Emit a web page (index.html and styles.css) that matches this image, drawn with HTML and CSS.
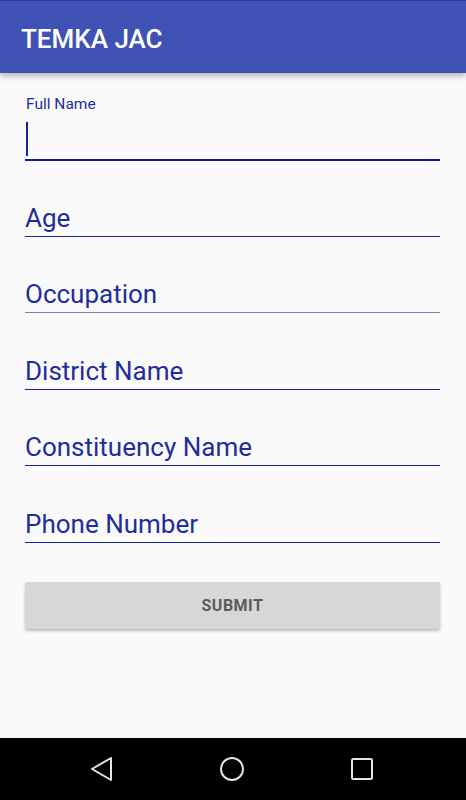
FILE: index.html
```html
<!DOCTYPE html>
<html lang="en">
<head>
	<meta charset="UTF-8">
	<meta name="viewport" content="width=device-width, initial-scale=1.0">
	<title>TEMKA JAC</title>
	<link rel="stylesheet" href="styles.css">
</head>
<body>
	<div class="screen">
		<div class="appbar">TEMKA JAC</div>
		<div class="content">
			<div class="field focused">
				<div class="label">Full Name</div>
				<div class="input"><span class="cursor"></span></div>
			</div>
			<div class="field">Age</div>
			<div class="field light">Occupation</div>
			<div class="field">District Name</div>
			<div class="field">Constituency Name</div>
			<div class="field">Phone Number</div>
			<button class="submit">SUBMIT</button>
		</div>
		<div class="navbar">
			<svg width="24" height="26" viewBox="0 0 24 26"><path d="M2 13 L21 2 L21 24 Z" fill="none" stroke="#e6e6e6" stroke-width="2" stroke-linejoin="round"/></svg>
			<svg width="26" height="26" viewBox="0 0 26 26"><circle cx="13" cy="13" r="11" fill="none" stroke="#e6e6e6" stroke-width="2"/></svg>
			<svg width="24" height="24" viewBox="0 0 24 24"><rect x="2" y="2" width="20" height="20" rx="1.5" fill="none" stroke="#e6e6e6" stroke-width="2"/></svg>
		</div>
	</div>
</body>
</html>
```
FILE: styles.css
```css
body{
	margin: 0;
	font-family: Roboto, "Noto Sans", sans-serif;
	background-color: #fafafa;
}
.screen{
	display: flex;
	flex-direction: column;
	height: 800px;
}
.appbar{
	height: 73px;
	border-top: 1px solid #2f3d94;
	background-color: #3f51b5;
	color: #fff;
	font-size: 26px;
	font-weight: 500;
	line-height: 72px;
	padding: 2px 0 0 21px;
	box-sizing: border-box;
	box-shadow: 0 3px 6px rgba(0,0,0,0.28);
	position: relative;
	z-index: 1;
}
.content{
	flex: 1;
	display: flex;
	flex-direction: column;
	padding: 0 26px 0 25px;
}
.field{
	margin-top: 42.5px;
	line-height: 30px;
	padding-bottom: 3px;
	font-size: 26px;
	color: #1f2c9e;
	border-bottom: 1px solid #1424a0;
}
.field.light{
	border-bottom-color: #7c84b4;
}
.field.focused{
	margin-top: 22px;
	padding-bottom: 0;
	line-height: normal;
	border-bottom: 2px solid #0f1c96;
}
.focused + .field{
	margin-top: 41.5px;
}
.label{
	font-size: 15.5px;
	line-height: 18px;
	padding-left: 1px;
}
.input{
	height: 46px;
	padding-top: 9px;
	box-sizing: border-box;
}
.cursor{
	display: block;
	width: 2px;
	height: 34px;
	margin-left: 1px;
	background-color: #1424a0;
}
.submit{
	margin-top: 39px;
	height: 47px;
	border: none;
	border-radius: 2px;
	background-color: #d6d7d7;
	color: #5c5c5c;
	font-family: Roboto, sans-serif;
	font-size: 16px;
	font-weight: bold;
	letter-spacing: 0.5px;
	padding-top: 2px;
	box-shadow: 0 2px 3px rgba(0,0,0,0.25);
}
.navbar{
	height: 62px;
	background-color: #000;
	display: flex;
	align-items: center;
	justify-content: center;
	gap: 105px;
	padding-right: 2px;
}
```
